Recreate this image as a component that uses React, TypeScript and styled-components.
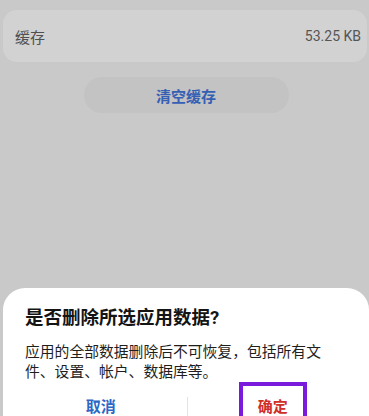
import React from 'react';
import styled, { createGlobalStyle } from 'styled-components';

const FONT = `Roboto, "Noto Sans CJK SC", "Noto Sans", sans-serif`;

const GlobalStyle = createGlobalStyle`
  html, body {
    margin: 0;
    padding: 0;
    background: #c9c9c9;
    font-family: ${FONT};
  }
`;

const Screen = styled.div`
  position: relative;
  width: 369px;
  height: 416px;
  overflow: hidden;
  background: #c9c9c9;
  display: flex;
  flex-direction: column;
`;

const Settings = styled.div`
  display: flex;
  flex-direction: column;
  align-items: center;
  padding: 10px 2px 0 3px;
  gap: 15px;
`;

const InfoCard = styled.div`
  box-sizing: border-box;
  width: 100%;
  height: 52px;
  display: flex;
  align-items: center;
  justify-content: space-between;
  padding: 0 6px 0 12px;
  border-radius: 14px;
  background: #d2d2d2;
  color: #505050;
  font-size: 15px;
`;

const Value = styled.span`
  font-size: 14px;
  color: #555555;
`;

const PillButton = styled.button`
  width: 205px;
  height: 36px;
  margin-left: 2px;
  border: none;
  border-radius: 18px;
  background: #c3c3c3;
  color: #3560b4;
  font-family: ${FONT};
  font-size: 15px;
  font-weight: 600;
`;

const Sheet = styled.div`
  box-sizing: border-box;
  margin-top: auto;
  margin-left: 3px;
  height: 128px;
  background: #ffffff;
  border-radius: 22px 22px 0 0;
  padding-top: 18px;
  overflow: hidden;
  flex-shrink: 0;
`;

const Title = styled.div`
  padding-left: 22px;
  font-size: 18.5px;
  line-height: 24px;
  font-weight: 700;
  color: #141414;
`;

const Message = styled.div`
  margin-top: 12px;
  padding-left: 22px;
  max-width: 305px;
  font-size: 14.8px;
  line-height: 20px;
  color: #1e1e1e;
`;

const Actions = styled.div`
  display: flex;
  align-items: flex-start;
  padding: 0 10px 0 12px;
  height: 50px;
`;

const Action = styled.button<{ $tone: 'blue' | 'red' }>`
  flex: 1;
  height: 50px;
  border: none;
  background: transparent;
  padding: 0;
  display: flex;
  align-items: flex-start;
  justify-content: center;
  font-family: ${FONT};
  font-size: 15px;
  font-weight: 600;
  color: ${(p) => (p.$tone === 'blue' ? '#2c68c4' : '#cf2e2a')};
`;

const Label = styled.span`
  display: block;
  padding-top: 15px;
  line-height: 20px;
`;

const Highlight = styled.span`
  display: block;
  box-sizing: border-box;
  width: 68px;
  height: 60px;
  padding-top: 11px;
  border: 4px solid #7a1adc;
  border-bottom: none;
  line-height: 20px;
  margin-left: -1px;
`;

const Divider = styled.div`
  width: 1px;
  height: 22px;
  margin-top: 15px;
  background: #e4e4e4;
`;

const App: React.FC = () => {
  return (
    <>
      <GlobalStyle />
      <Screen>
        <Settings>
          <InfoCard>
            <span>缓存</span>
            <Value>53.25 KB</Value>
          </InfoCard>
          <PillButton>清空缓存</PillButton>
        </Settings>

        <Sheet>
          <Title>是否删除所选应用数据?</Title>
          <Message>应用的全部数据删除后不可恢复，包括所有文件、设置、帐户、数据库等。</Message>
          <Actions>
            <Action $tone="blue">
              <Label>取消</Label>
            </Action>
            <Divider />
            <Action $tone="red">
              <Highlight>确定</Highlight>
            </Action>
          </Actions>
        </Sheet>
      </Screen>
    </>
  );
};

export default App;
